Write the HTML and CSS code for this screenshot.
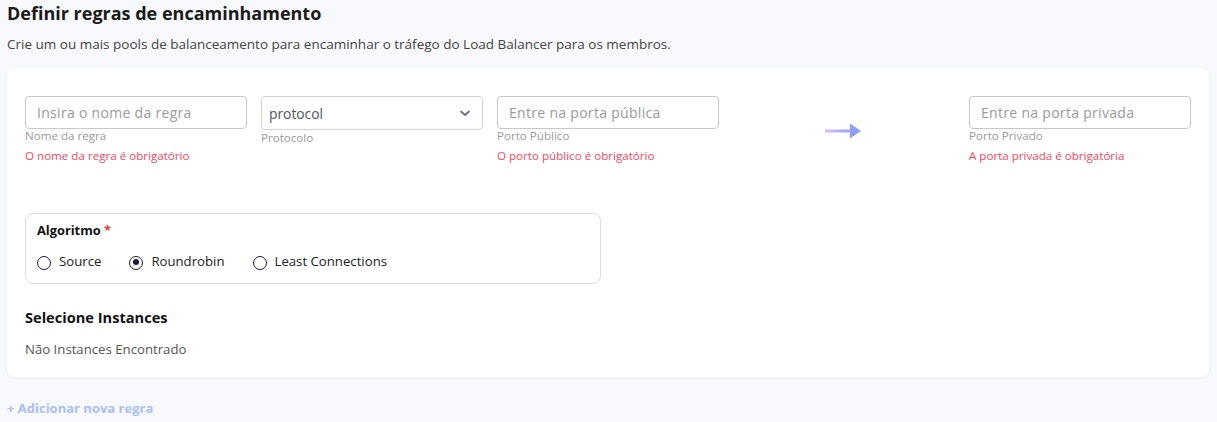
FILE: index.html
```html
<!DOCTYPE html>
<html lang="pt">
<head>
  <meta charset="UTF-8" />
  <title>Definir regras de encaminhamento</title>
  <link rel="stylesheet" href="styles.css">
</head>
<body>

  <h1 class="page-title">Definir regras de encaminhamento</h1>
  <p class="page-sub">Crie um ou mais pools de balanceamento para encaminhar o tráfego do Load Balancer para os membros.</p>

  <div class="rule-card">
    <div class="rule-row">
      <div class="field">
        <input type="text" class="text-input" placeholder="Insira o nome da regra" />
        <span class="hint">Nome da regra</span>
        <span class="error">O nome da regra é obrigatório</span>
      </div>
      <div class="field">
        <div class="select-box">
          <span>protocol</span>
          <svg width="14" height="14" viewBox="0 0 14 14"><path d="M3 5.5l4 3.5 4-3.5" fill="none" stroke="#6b7280" stroke-width="1.8" stroke-linecap="round" stroke-linejoin="round"/></svg>
        </div>
        <span class="hint">Protocolo</span>
      </div>
      <div class="field">
        <input type="text" class="text-input" placeholder="Entre na porta pública" />
        <span class="hint">Porto Público</span>
        <span class="error">O porto público é obrigatório</span>
      </div>
      <div class="arrow-cell">
        <svg width="38" height="16" viewBox="0 0 38 16">
          <defs>
            <linearGradient id="arr" x1="0" x2="1" y1="0" y2="0">
              <stop offset="0" stop-color="#dcbcf9"/>
              <stop offset="1" stop-color="#95a3f7"/>
            </linearGradient>
          </defs>
          <rect x="0" y="6.5" width="27" height="3" fill="url(#arr)"/>
          <path d="M25 0.5L36 8 25 15.5z" fill="#8f9df7"/>
        </svg>
      </div>
      <div class="field">
        <input type="text" class="text-input" placeholder="Entre na porta privada" />
        <span class="hint">Porto Privado</span>
        <span class="error">A porta privada é obrigatória</span>
      </div>
    </div>

    <div class="algo-box">
      <div class="algo-title">Algoritmo <span class="req">*</span></div>
      <div class="algo-options">
        <label class="radio"><span class="dot"></span>Source</label>
        <label class="radio"><span class="dot checked"></span>Roundrobin</label>
        <label class="radio"><span class="dot"></span>Least Connections</label>
      </div>
    </div>

    <h2 class="section-title">Selecione Instances</h2>
    <p class="empty">Não Instances Encontrado</p>
  </div>

  <a class="add-rule">+ Adicionar nova regra</a>

</body>
</html>
```

FILE: styles.css
```css
body {
  margin: 0;
  padding: 2px 8px 0 7px;
  background: #f8f9fc;
  font-family: "Open Sans", "Liberation Sans", sans-serif;
  color: #1f1f1f;
}

.page-title {
  font-size: 18px;
  font-weight: 700;
  margin: 0;
  line-height: 22px;
  color: #1a1a1a;
}

.page-sub {
  font-size: 13.5px;
  color: #444;
  margin: 11px 0 0;
  line-height: 18px;
}

.rule-card {
  background: #fff;
  border-radius: 8px;
  box-shadow: 0 1px 4px rgba(0,0,0,0.05);
  margin-top: 15px;
  padding: 28px 18px 20px 18px;
}

.rule-row {
  display: grid;
  grid-template-columns: repeat(5, 222px);
  gap: 14px;
  align-items: start;
}

.field {
  display: flex;
  flex-direction: column;
}

.text-input {
  height: 33px;
  box-sizing: border-box;
  border: 1px solid #c8c8c8;
  border-radius: 4px;
  padding: 0 11px;
  font-family: inherit;
  font-size: 14px;
  letter-spacing: 0.3px;
  outline: none;
}

.text-input::placeholder {
  color: #9a9a9a;
}

.select-box {
  height: 34px;
  box-sizing: border-box;
  border: 1px solid #d3d3d8;
  border-radius: 4px;
  padding: 0 10px 0 7px;
  display: flex;
  align-items: center;
  justify-content: space-between;
  font-size: 13.8px;
  color: #4b5563;
}

.hint {
  font-size: 11.6px;
  color: #9a9a9a;
  line-height: 14px;
  margin-top: 0;
}

.select-box + .hint {
  margin-top: 1px;
}

.error {
  font-size: 11.6px;
  color: #f2475e;
  margin-top: 6px;
  line-height: 14px;
}

.arrow-cell {
  display: flex;
  justify-content: center;
  padding: 27px 0 0;
}

.algo-box {
  width: 576px;
  box-sizing: border-box;
  border: 1px solid #dcdcdc;
  border-radius: 8px;
  margin-top: 50px;
  padding: 8px 11px 13px;
}

.algo-title {
  font-size: 12.8px;
  font-weight: 700;
  color: #111;
  line-height: 16px;
}

.req {
  color: #e53935;
}

.algo-options {
  display: flex;
  gap: 28px;
  margin-top: 14px;
}

.radio {
  display: flex;
  align-items: center;
  gap: 8px;
  font-size: 13.2px;
  color: #222;
}

.dot {
  width: 14px;
  height: 14px;
  border: 1.5px solid #1a1640;
  border-radius: 50%;
  box-sizing: border-box;
  position: relative;
  margin-top: 3px;
}

.dot.checked::after {
  content: "";
  position: absolute;
  left: 2.5px;
  top: 2.5px;
  width: 6px;
  height: 6px;
  border-radius: 50%;
  background: #1a1640;
}

.section-title {
  font-size: 14.6px;
  font-weight: 700;
  margin: 24px 0 0;
  color: #111;
  line-height: 18px;
}

.empty {
  font-size: 13.2px;
  color: #555;
  margin: 15px 0 0;
  line-height: 16px;
}

.add-rule {
  display: inline-block;
  margin-top: 22px;
  font-size: 13px;
  font-weight: 700;
  color: #a9bff7;
}
```
